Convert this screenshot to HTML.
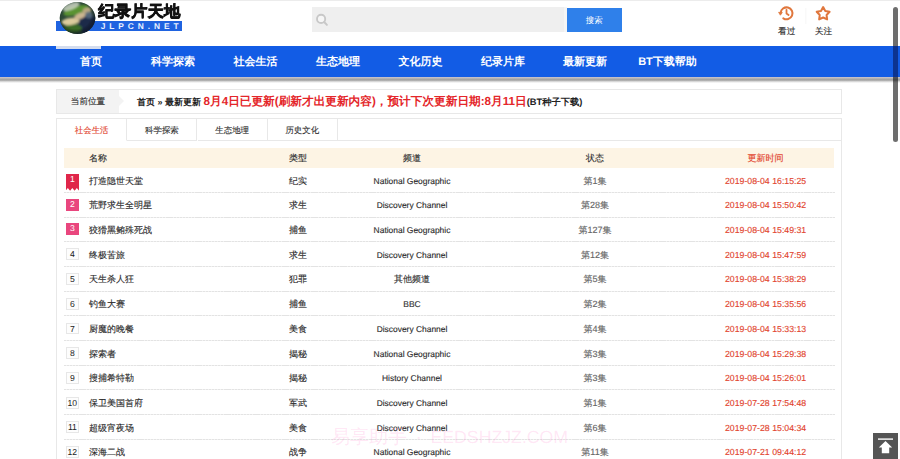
<!DOCTYPE html>
<html lang="zh">
<head>
<meta charset="utf-8">
<title>纪录片天地</title>
<style>
*{box-sizing:border-box;margin:0;padding:0}
html,body{width:900px;height:459px;overflow:hidden;background:#fff}
body{font-family:"Liberation Sans",sans-serif;text-rendering:geometricPrecision;font-size:9px;color:#2c2c2c;position:relative}
a{color:inherit;text-decoration:none}
.abs{position:absolute}
.j{display:inline-block;white-space:nowrap;text-align:justify;text-align-last:justify;vertical-align:baseline}
#topline{left:0;top:0;width:900px;height:1px;background:#ececec}
/* header */
#logo{left:56px;top:0;width:130px;height:40px}
#logotxt{left:97.5px;top:3.2px;font-size:15.4px;font-weight:bold;color:#111;line-height:18px;white-space:nowrap;transform:scaleX(1.07);transform-origin:0 0;text-shadow:0 .5px 0 #111,.4px 0 0 #111}
#logobar{left:56.3px;top:21.3px;width:126.2px;height:9.5px;background:#1f63e0}
#logoen{left:100.8px;top:21.3px;width:84px;height:9.5px;line-height:10px;font-size:8.4px;font-weight:bold;color:#eaf1ff;letter-spacing:3.9px;white-space:nowrap}
#sbox{left:312px;top:7px;width:252px;height:25.4px;background:#efefef}
#sgap{left:564px;top:7px;width:3px;height:25.4px;background:#f5f5f5}
#sbtn{left:566.5px;top:7.5px;width:55.5px;height:24.5px;background:#2f80ea;color:#fff;text-align:center;line-height:24.5px;font-size:8.44px}
.uico{top:26.1px;width:30px;text-align:center;font-size:8.7px;line-height:10px;color:#2a2a2a}
/* nav */
#nav{left:0;top:46px;width:900px;height:31px;background:#125ce5}
#navsh{left:0;top:77px;width:900px;height:6px;background:linear-gradient(to bottom,#cbc6d0 0,#b6b4b6 22%,#a3a3a3 40%,#a6a6a6 54%,#dadada 76%,#fff 100%)}
#navact{left:56px;top:46px;width:44.5px;height:2.6px;background:#d3dcee}
.nv{top:47px;height:31px;line-height:31px;color:#fff;font-weight:bold;font-size:11px;white-space:nowrap;transform:translateX(-50%)}
/* crumb */
#crumb{left:56px;top:88.5px;width:786px;height:25.5px;border:1px solid #e8e8e8;background:#fff}
#crlab{left:57px;top:89.5px;width:62px;height:23.5px;background:#f3f3f3;line-height:23.5px;text-align:center;font-size:8.6px;color:#333}
#crarr{left:119px;top:96.4px;width:0;height:0;border-top:5.3px solid transparent;border-bottom:5.3px solid transparent;border-left:5.4px solid #f3f3f3}
#crtxt{left:137px;top:89.9px;height:23.5px;line-height:23.5px;white-space:nowrap;font-weight:bold;color:#222;font-size:9px}
#crtxt b.r{color:#e4262a;font-size:11.67px}
#crtxt b.s{font-size:9.3px}
/* panel */
#panel{left:56px;top:117.5px;width:786px;height:360px;border:1px solid #e8e8e8;background:#fff}
.tab{top:118.5px;height:22.5px;line-height:22.5px;text-align:center;font-size:8.44px;color:#333;border-right:1px solid #e8e8e8;border-bottom:1px solid #e8e8e8;background:#fff}
#tabrest{left:337.7px;top:118.5px;width:503.3px;height:22.5px;border-bottom:1px solid #e8e8e8}
#thead{left:64px;top:148px;width:770px;height:20px;background:#fdf4e4}
.row{left:64px;width:771px;height:24.7px}
.row::after{content:"";position:absolute;left:0;right:0;bottom:0;height:1px;background:repeating-linear-gradient(to right,#e3e3e3 0,#e3e3e3 2.1px,#f1f1f1 2.1px,#f1f1f1 2.9px)}
.c,.tab,#crlab,.uico{-webkit-text-stroke:.13px}
.c{position:absolute;top:.5px;height:24.7px;line-height:24.7px;white-space:nowrap}
#thead .c{top:0;height:20px;line-height:20px}
.c1{left:25px}
.c2{left:225px}
.c3{left:298px;width:100px;text-align:center}
.c3 i{font-style:normal;font-size:8.44px}
.c4{left:481px;width:100px;text-align:center;color:#666}
.c5{left:631.6px;width:140px;text-align:center;color:#e2452f;font-size:8.75px}
#thead .c5{font-size:9px}
#thead .c4{color:#333}
.n{position:absolute;left:1.6px;top:6.2px;width:13.5px;height:11.9px;line-height:10.4px;text-align:center;font-size:8.6px;color:#222;border:1px solid #e7e7e7;background:#fdfdfd}
.n.h{color:#fff;border:none;line-height:11.9px;top:5.9px;background:#e9467e}
.n.h1{background:#e0264a;height:16.7px;top:5.9px;clip-path:polygon(0 0,100% 0,100% 100%,83.3% 84%,66.6% 100%,50% 84%,33.3% 100%,16.6% 84%,0 100%)}
#totop{left:873px;top:433px;width:25px;height:26px;background:#555}
#sbar{left:893.2px;top:6.8px;width:4.9px;height:135.4px;border-radius:2.5px;background:rgba(0,0,0,.57)}
#sbar2{left:893.2px;top:46px;width:4.9px;height:31px;background:#0c3390}
#wm{left:331px;top:426px;height:22px;line-height:22px;font-size:19px;color:rgba(255,110,195,.17);white-space:nowrap}
#wm i{font-style:normal;display:inline-block;width:23.5px;text-align:center}
#wm b{font-weight:normal;font-size:17.7px}
</style>
</head>
<body>
<div class="abs" id="topline"></div>

<!-- logo -->
<div class="abs" id="logobar"></div>
<svg class="abs" style="left:58px;top:0" width="40" height="36" viewBox="0 0 40 36">
  <defs>
    <clipPath id="gc"><ellipse cx="19.5" cy="18" rx="17.8" ry="16"/></clipPath>
    <filter id="gb" x="-20%" y="-20%" width="140%" height="140%"><feGaussianBlur stdDeviation="1.1"/></filter>
    <radialGradient id="ge" cx="45%" cy="42%" r="58%">
      <stop offset="0" stop-color="#000" stop-opacity="0"/>
      <stop offset="0.72" stop-color="#000" stop-opacity="0"/>
      <stop offset="1" stop-color="#0a1020" stop-opacity=".6"/>
    </radialGradient>
  </defs>
  <ellipse cx="19.5" cy="18" rx="17.8" ry="16" fill="#2c4836"/>
  <g clip-path="url(#gc)"><g filter="url(#gb)">
    <ellipse cx="30" cy="24" rx="10" ry="10" fill="#1a2a4a"/>
    <ellipse cx="15" cy="28.5" rx="9" ry="4.5" fill="#3a6c28"/>
    <ellipse cx="18" cy="10.5" rx="13" ry="4.4" transform="rotate(-16 18 10.5)" fill="#5a9332"/>
    <ellipse cx="12.5" cy="21.5" rx="9" ry="3.6" transform="rotate(-6 12.5 21.5)" fill="#dccb9c"/>
    <ellipse cx="22" cy="16" rx="6.5" ry="3" transform="rotate(-22 22 16)" fill="#cbb590"/>
    <ellipse cx="29" cy="10.5" rx="4.6" ry="2.8" transform="rotate(-20 29 10.5)" fill="#b9a880"/>
    <ellipse cx="31" cy="15" rx="4" ry="3.5" fill="#5e7182" opacity=".8"/>
    <ellipse cx="13" cy="6.5" rx="9" ry="3.2" transform="rotate(-22 13 6.5)" fill="#dfe4d4" opacity=".75"/>
  </g></g>
  <ellipse cx="19.5" cy="18" rx="17.8" ry="16" fill="url(#ge)"/>
</svg>
<div class="abs" id="logotxt"><span class="j" style="width:76.95px">纪录片天地</span></div>
<div class="abs" id="logoen">JLPCN.NET</div>

<!-- search -->
<div class="abs" id="sbox"></div>
<div class="abs" id="sgap"></div>
<svg class="abs" style="left:315px;top:11.6px" width="15" height="15" viewBox="0 0 15 15"><circle cx="6.1" cy="6.9" r="4.1" fill="#f6f6f6" stroke="#c8c8c8" stroke-width="1.9"/><path d="M9.4 10.3 L11.9 12.9" stroke="#c8c8c8" stroke-width="2" stroke-linecap="round"/></svg>
<div class="abs" id="sbtn"><span class="j" style="width:16.84px">搜索</span></div>

<!-- user icons -->
<svg class="abs" style="left:770px;top:0" width="70" height="40" viewBox="0 0 70 40">
  <path d="M10.65 13 A5.95 5.95 0 1 1 13.3 18.3" fill="none" stroke="#e0773d" stroke-width="2" stroke-linecap="round"/>
  <path d="M8.6 12.3 L12.3 12.5 L10.4 15.2 Z" fill="#e0773d" stroke="#e0773d" stroke-width=".8" stroke-linejoin="round"/>
  <path d="M16.5 9.8 V13.5 L18.6 15" fill="none" stroke="#e0773d" stroke-width="1.8" stroke-linecap="round" stroke-linejoin="round"/>
  <path d="M53.15 7.10 L55.27 10.99 L59.62 11.80 L56.57 15.01 L57.15 19.40 L53.15 17.50 L49.15 19.40 L49.73 15.01 L46.68 11.80 L51.03 10.99 Z" fill="none" stroke="#e0773d" stroke-width="2" stroke-linejoin="round"/>
  <rect x="35.5" y="8" width=".8" height="16" fill="#f4f4f4"/>
</svg>
<div class="abs uico" style="left:771.8px"><span class="j" style="width:17.38px">看过</span></div>
<div class="abs uico" style="left:808.4px"><span class="j" style="width:17.38px">关注</span></div>

<!-- nav -->
<div class="abs" id="nav"></div>
<div class="abs" id="navsh"></div>
<div class="abs" id="navact"></div>
<div class="abs nv" style="left:91px"><span class="j" style="width:22.00px">首页</span></div>
<div class="abs nv" style="left:173px"><span class="j" style="width:44.00px">科学探索</span></div>
<div class="abs nv" style="left:255.5px"><span class="j" style="width:44.00px">社会生活</span></div>
<div class="abs nv" style="left:338px"><span class="j" style="width:44.00px">生态地理</span></div>
<div class="abs nv" style="left:420.5px"><span class="j" style="width:44.00px">文化历史</span></div>
<div class="abs nv" style="left:503px"><span class="j" style="width:44.00px">纪录片库</span></div>
<div class="abs nv" style="left:585px"><span class="j" style="width:44.00px">最新更新</span></div>
<div class="abs nv" style="left:667.5px"><span class="j" style="width:58.67px">BT下载帮助</span></div>

<!-- breadcrumb -->
<div class="abs" id="crumb"></div>
<div class="abs" id="crlab"><span class="j" style="width:34.38px">当前位置</span></div>
<div class="abs" id="crarr"></div>
<div class="abs" id="crtxt"><span class="j" style="width:18.00px">首页</span> » <span class="j" style="width:36.00px">最新更新</span> <b class="r"><span class="j" style="width:323.17px">8月4日已更新(刷新才出更新内容)，预计下次更新日期:8月11日</span></b><b class="s"><span class="j" style="width:55.78px">(BT种子下载)</span></b></div>

<!-- panel -->
<div class="abs" id="panel"></div>
<div class="abs tab" style="left:57px;width:70.3px;color:#e2452f;border-bottom-color:#fff"><span class="j" style="width:33.69px">社会生活</span></div>
<div class="abs tab" style="left:127.3px;width:70.2px"><span class="j" style="width:33.69px">科学探索</span></div>
<div class="abs tab" style="left:197.5px;width:70.4px"><span class="j" style="width:33.69px">生态地理</span></div>
<div class="abs tab" style="left:267.9px;width:69.8px"><span class="j" style="width:33.69px">历史文化</span></div>
<div class="abs" id="tabrest"></div>

<div class="abs" id="thead">
  <span class="c c1"><span class="j" style="width:18.00px">名称</span></span><span class="c c2"><span class="j" style="width:18.00px">类型</span></span><span class="c c3"><span class="j" style="width:18.00px">频道</span></span><span class="c c4"><span class="j" style="width:18.00px">状态</span></span><span class="c c5"><span class="j" style="width:36.00px">更新时间</span></span>
</div>

<div class="abs row" style="top:168.15px"><span class="n h h1">1</span><span class="c c1"><span class="j" style="width:54.00px">打造隐世天堂</span></span><span class="c c2"><span class="j" style="width:18.00px">纪实</span></span><span class="c c3"><i>National Geographic</i></span><span class="c c4"><span class="j" style="width:23.02px">第1集</span></span><span class="c c5">2019-08-04 16:15:25</span></div>
<div class="abs row" style="top:192.85px"><span class="n h">2</span><span class="c c1"><span class="j" style="width:63.00px">荒野求生全明星</span></span><span class="c c2"><span class="j" style="width:18.00px">求生</span></span><span class="c c3"><i>Discovery Channel</i></span><span class="c c4"><span class="j" style="width:28.02px">第28集</span></span><span class="c c5">2019-08-04 15:50:42</span></div>
<div class="abs row" style="top:217.55px"><span class="n h">3</span><span class="c c1"><span class="j" style="width:63.00px">狡猾黑鲔殊死战</span></span><span class="c c2"><span class="j" style="width:18.00px">捕鱼</span></span><span class="c c3"><i>National Geographic</i></span><span class="c c4"><span class="j" style="width:33.03px">第127集</span></span><span class="c c5">2019-08-04 15:49:31</span></div>
<div class="abs row" style="top:242.25px"><span class="n">4</span><span class="c c1"><span class="j" style="width:36.00px">终极苦旅</span></span><span class="c c2"><span class="j" style="width:18.00px">求生</span></span><span class="c c3"><i>Discovery Channel</i></span><span class="c c4"><span class="j" style="width:28.02px">第12集</span></span><span class="c c5">2019-08-04 15:47:59</span></div>
<div class="abs row" style="top:266.95px"><span class="n">5</span><span class="c c1"><span class="j" style="width:45.00px">天生杀人狂</span></span><span class="c c2"><span class="j" style="width:18.00px">犯罪</span></span><span class="c c3"><span class="j" style="width:36.00px">其他频道</span></span><span class="c c4"><span class="j" style="width:23.02px">第5集</span></span><span class="c c5">2019-08-04 15:38:29</span></div>
<div class="abs row" style="top:291.65px"><span class="n">6</span><span class="c c1"><span class="j" style="width:36.00px">钓鱼大赛</span></span><span class="c c2"><span class="j" style="width:18.00px">捕鱼</span></span><span class="c c3"><i>BBC</i></span><span class="c c4"><span class="j" style="width:23.02px">第2集</span></span><span class="c c5">2019-08-04 15:35:56</span></div>
<div class="abs row" style="top:316.35px"><span class="n">7</span><span class="c c1"><span class="j" style="width:45.00px">厨魔的晚餐</span></span><span class="c c2"><span class="j" style="width:18.00px">美食</span></span><span class="c c3"><i>Discovery Channel</i></span><span class="c c4"><span class="j" style="width:23.02px">第4集</span></span><span class="c c5">2019-08-04 15:33:13</span></div>
<div class="abs row" style="top:341.05px"><span class="n">8</span><span class="c c1"><span class="j" style="width:27.00px">探索者</span></span><span class="c c2"><span class="j" style="width:18.00px">揭秘</span></span><span class="c c3"><i>National Geographic</i></span><span class="c c4"><span class="j" style="width:23.02px">第3集</span></span><span class="c c5">2019-08-04 15:29:38</span></div>
<div class="abs row" style="top:365.75px"><span class="n">9</span><span class="c c1"><span class="j" style="width:45.00px">搜捕希特勒</span></span><span class="c c2"><span class="j" style="width:18.00px">揭秘</span></span><span class="c c3"><i>History Channel</i></span><span class="c c4"><span class="j" style="width:23.02px">第3集</span></span><span class="c c5">2019-08-04 15:26:01</span></div>
<div class="abs row" style="top:390.45px"><span class="n">10</span><span class="c c1"><span class="j" style="width:54.00px">保卫美国首府</span></span><span class="c c2"><span class="j" style="width:18.00px">军武</span></span><span class="c c3"><i>Discovery Channel</i></span><span class="c c4"><span class="j" style="width:23.02px">第1集</span></span><span class="c c5">2019-07-28 17:54:48</span></div>
<div class="abs row" style="top:415.15px"><span class="n">11</span><span class="c c1"><span class="j" style="width:45.00px">超级宵夜场</span></span><span class="c c2"><span class="j" style="width:18.00px">美食</span></span><span class="c c3"><i>Discovery Channel</i></span><span class="c c4"><span class="j" style="width:23.02px">第6集</span></span><span class="c c5">2019-07-28 15:04:34</span></div>
<div class="abs row" style="top:439.85px"><span class="n">12</span><span class="c c1"><span class="j" style="width:36.00px">深海二战</span></span><span class="c c2"><span class="j" style="width:18.00px">战争</span></span><span class="c c3"><i>National Geographic</i></span><span class="c c4"><span class="j" style="width:27.34px">第11集</span></span><span class="c c5">2019-07-21 09:44:12</span></div>

<div class="abs" id="wm"><span class="j" style="width:76.00px">易享助手</span><i>·</i><b>EEDSHZJZ.COM</b></div>

<div class="abs" id="totop">
  <svg width="25" height="26" viewBox="0 0 25 26"><rect x="5" y="5.4" width="15" height="1.4" fill="#fff"/><path d="M12.5 8 L19.2 14.6 H16.2 V20.2 H8.8 V14.6 H5.8 Z" fill="#fff"/></svg>
</div>
<div class="abs" id="sbar"></div>
<div class="abs" id="sbar2"></div>
</body>
</html>
